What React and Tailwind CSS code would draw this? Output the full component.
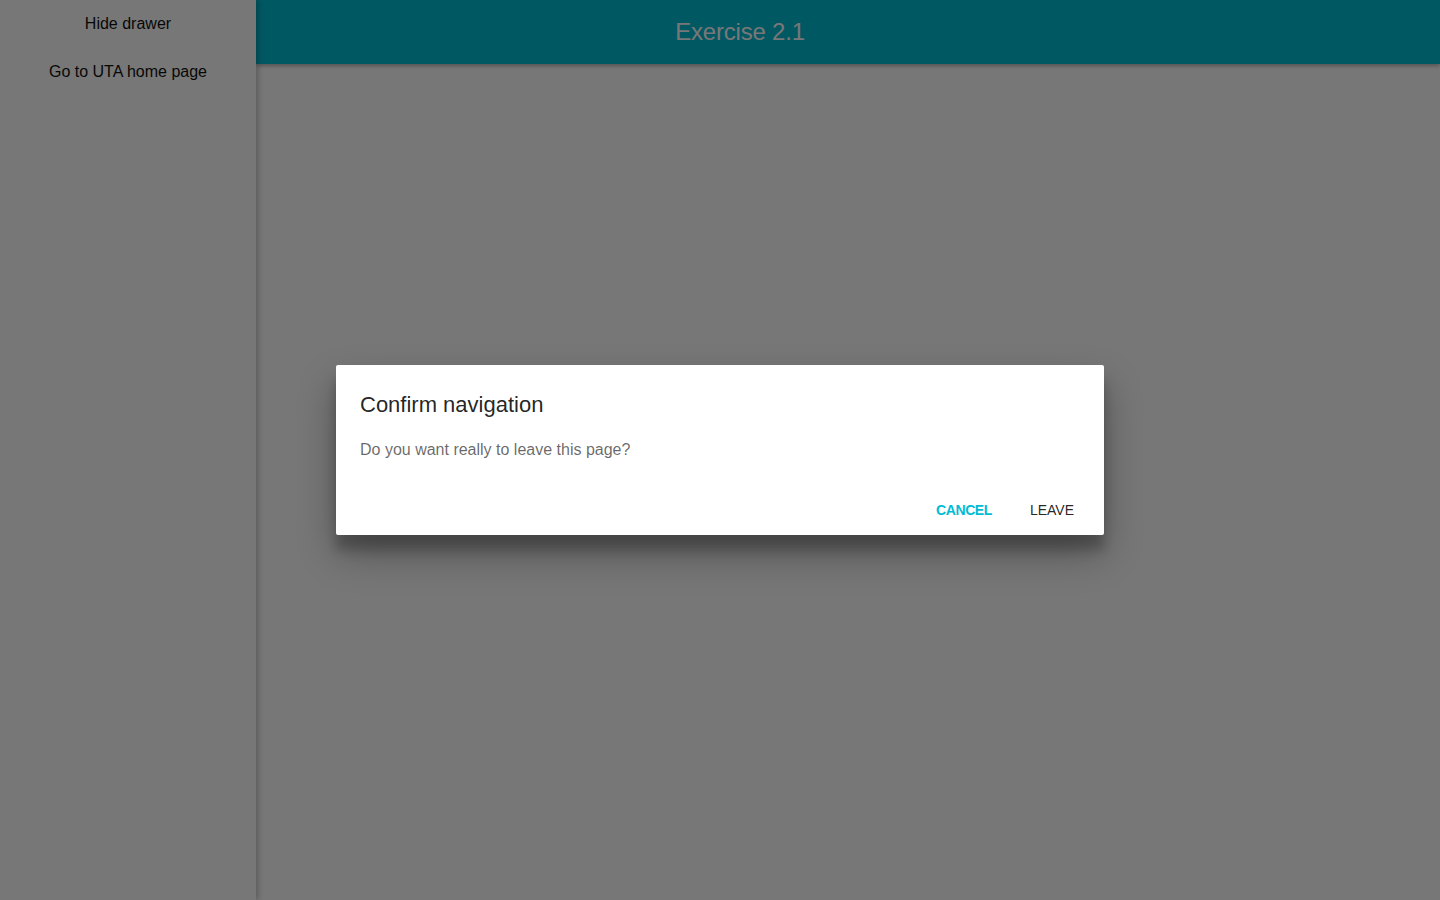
import React from "react";

export default function App() {
  const font = { fontFamily: '"Liberation Sans", Arial, Helvetica, sans-serif' };
  return (
    <div className="relative w-[1440px] h-[900px] overflow-hidden bg-white" style={font}>
      <div className="flex h-full">
        <aside className="w-[256px] h-full bg-white shadow-[2px_0_6px_rgba(0,0,0,0.25)] z-10 flex flex-col">
          <div className="h-[47px] flex items-center justify-center text-[16px] text-[#111]">Hide drawer</div>
          <div className="h-[50px] flex items-center justify-center text-[16px] text-[#111]">Go to UTA home page</div>
        </aside>
        <main className="flex-1 flex flex-col">
          <header className="h-[64px] bg-[#00bcd4] shadow-[0_2px_4px_rgba(0,0,0,0.3)] flex items-center justify-center pr-[216px]">
            <h1 className="text-[24px] text-white font-normal tracking-[-0.2px]">Exercise 2.1</h1>
          </header>
          <div className="flex-1" />
        </main>
      </div>

      <div className="absolute inset-0 z-20 bg-[rgba(0,0,0,0.533)] flex items-center justify-center">
        <div className="w-[768px] bg-white rounded-[2px] shadow-[0_19px_38px_rgba(0,0,0,0.3),0_15px_12px_rgba(0,0,0,0.22)] flex flex-col">
          <div className="px-6 pt-6 pb-[17px]">
            <h2 className="text-[22px] leading-[32px] text-[rgba(0,0,0,0.87)] font-normal">Confirm navigation</h2>
          </div>
          <div className="px-6 pb-[22px]">
            <p className="text-[16px] leading-[24px] text-[rgba(0,0,0,0.6)]">Do you want really to leave this page?</p>
          </div>
          <div className="flex justify-end items-center px-2 pt-2 pb-[7px]">
            <button className="h-9 min-w-[88px] px-2 text-[14px] uppercase font-bold tracking-[-0.4px] text-[#00bcd4]">Cancel</button>
            <button className="h-9 min-w-[88px] px-2 text-[14px] uppercase text-[rgba(0,0,0,0.87)]">Leave</button>
          </div>
        </div>
      </div>
    </div>
  );
}
